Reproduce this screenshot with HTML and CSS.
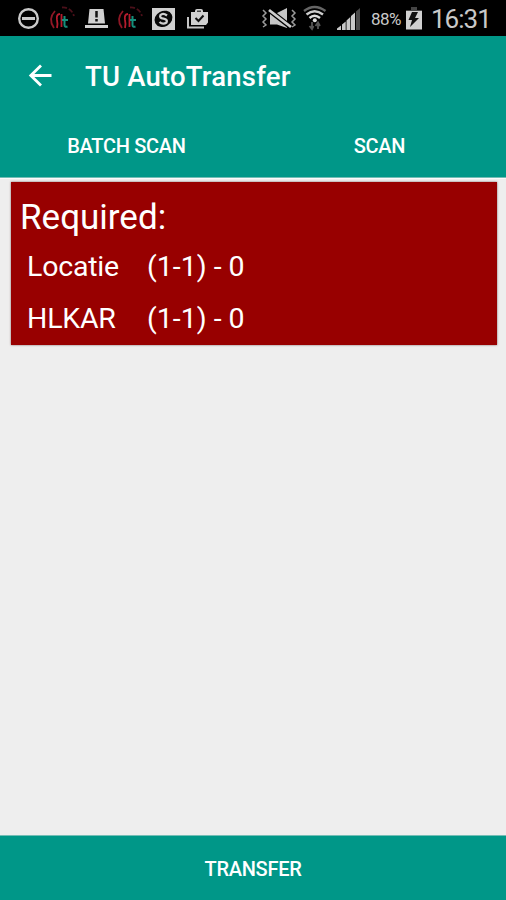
FILE: index.html
```
<!DOCTYPE html>
<html lang="nl">
<head>
    <meta charset="UTF-8">
    <meta name="viewport" content="width=device-width, initial-scale=1.0">
    <title>TU AutoTransfer</title>
    <link rel="stylesheet" href="styles.css">
</head>
<body>
    <!-- Status bar -->
    <div class="status-bar">
        <div class="status-left">
            <svg width="30" height="36" viewBox="14 0 30 36">
                <circle cx="28.500" cy="18.500" r="9.300" fill="none" stroke="#c9c9c9" stroke-width="2.400"/>
                <path d="M22 18.500H35" stroke="#c9c9c9" stroke-width="3"/>
            </svg>
            <svg width="34" height="36" viewBox="44 0 34 36">
                <g fill="none" stroke="#b51c2e" stroke-width="1.800">
                    <path d="M55 11Q47.500 19 54 28" stroke="#8d1725"/>
                    <path d="M60 14Q56 14 57 20Q58 24 57 28M61.500 14V27"/>
                    <path d="M62 7.500Q71 7 74 16" stroke="#4c101a" stroke-dasharray="5 2"/>
                    <path d="M64.500 16V25Q64.500 27.500 67.500 26.500M62 20H68" stroke="#168f7c" stroke-width="2"/>
                </g>
            </svg>
            <svg width="34" height="36" viewBox="78 0 34 36">
                <path d="M88 23.500L89.500 9H103.500L105 23.500ZM85 25H108V28H85Z" fill="#d0d0d0"/>
                <path d="M96.500 11V17.500M96.500 19V21.500" stroke="#111" stroke-width="2.500"/>
            </svg>
            <svg width="34" height="36" viewBox="44 0 34 36">
                <g fill="none" stroke="#b51c2e" stroke-width="1.800">
                    <path d="M55 11Q47.500 19 54 28" stroke="#8d1725"/>
                    <path d="M60 14Q56 14 57 20Q58 24 57 28M61.500 14V27"/>
                    <path d="M62 7.500Q71 7 74 16" stroke="#4c101a" stroke-dasharray="5 2"/>
                    <path d="M64.500 16V25Q64.500 27.500 67.500 26.500M62 20H68" stroke="#168f7c" stroke-width="2"/>
                </g>
            </svg>
            <svg width="34" height="36" viewBox="146 0 34 36">
                <path d="M152 8H175V30H152Z" fill="#d0d0d0"/>
                <ellipse cx="163.500" cy="18.800" rx="9.300" ry="7.800" fill="#080808" transform="rotate(-28 163.500 18.800)"/>
                <path d="M167 15.500Q163 12.500 160.500 15Q159 18 163.500 18.700Q168 19.500 166.500 22.500Q163 25 159.500 22" fill="none" stroke="#d0d0d0" stroke-width="2.300"/>
            </svg>
            <svg width="34" height="36" viewBox="180 0 34 36">
                <path d="M187 17H189V26.500H204V28.500H187Z" fill="#c5c5c5"/>
                <path d="M191 12H195V11Q195 9 197 9H201Q203 9 203 11V12H208V22.500L206 25H191Z" fill="#d0d0d0"/>
                <path d="M197 11.200H201" stroke="#222" stroke-width="1.200"/>
                <path d="M195.500 18L198.500 21L203.500 15.500" fill="none" stroke="#111" stroke-width="2"/>
            </svg>
        </div>
        <div class="status-right">
            <svg width="40" height="36" viewBox="260 0 40 36">
                <path d="M270 13H277L287 8V28L277 24.500H270Z" fill="#c6c6c6"/>
                <path d="M267 8.500L292 28" stroke="#000" stroke-width="5"/>
                <path d="M269 10L291 27" stroke="#cfcfcf" stroke-width="2.800"/>
                <path d="M263 10L266 13L263 16L266 19L263 22L266 25L263 27M292 10L295 13L292 16L295 19L292 22L295 25L292 27" fill="none" stroke="#999" stroke-width="1.500"/>
            </svg>
            <svg width="32" height="36" viewBox="300 0 32 36">
                <g fill="none" stroke-width="2.400">
                    <path d="M304 11Q314.500 3 325.500 11" stroke="#666"/>
                    <path d="M306.500 14.500Q314.500 8 323 14.500" stroke="#ccc"/>
                    <path d="M309.500 18Q314.500 13.500 320 18" stroke="#ddd"/>
                </g>
                <circle cx="314.800" cy="20.300" r="2" fill="#ddd"/>
                <path d="M312 22V28M309.500 26L312 29L313.500 26M318 29V23M315.500 26L318 22.500L320 26" fill="none" stroke="#555" stroke-width="1.800"/>
            </svg>
            <svg width="34" height="36" viewBox="332 0 34 36">
                <path d="M337 30V28.500L341 25.500V30ZM342 30V24.500L345.700 21.500V30ZM346.500 30V20.500L350.300 17V30ZM351 30V16L355 12.500V30Z" fill="#c8c8c8"/>
                <path d="M356 30V11.500L360 8V30Z" fill="#494949"/>
            </svg>
            <span class="battery-level">88%</span>
            <svg width="26" height="36" viewBox="402 0 26 36">
                <path d="M411 7H417V10H422V14H406V10H411Z" fill="#444"/>
                <path d="M406 11H422V29.500H406Z" fill="#d0d0d0"/>
                <path d="M412 12H418L415 18H419L410 27L412 20H408.500Z" fill="#111"/>
            </svg>
            <span class="clock">16:31</span>
        </div>
    </div>

    <!-- Title and tabs -->
    <header class="app-bar">
        <div class="toolbar">
            <svg class="back-arrow" width="24" height="24" viewBox="0 0 24 24">
                <path d="M23.500 11.500H3M13 1.500L2.800 11.500L13 21.500" fill="none" stroke="#fff" stroke-width="2.800"/>
            </svg>
            <h1 class="title">TU AutoTransfer</h1>
        </div>
        <nav class="tabs">
            <a class="tab">BATCH SCAN</a>
            <a class="tab">SCAN</a>
        </nav>
    </header>

    <main class="content">
        <section class="required">
            <h2>Required:</h2>
            <div class="row">
                <span class="name">Locatie</span>
                <span>(1-1) - 0</span>
            </div>
            <div class="row">
                <span class="name">HLKAR</span>
                <span>(1-1) - 0</span>
            </div>
        </section>
    </main>

    <footer class="transfer">TRANSFER</footer>
</body>
</html>
```
FILE: styles.css
```
* {
    box-sizing: border-box;
}

body {
    margin: 0;
    height: 900px;
    display: flex;
    flex-direction: column;
    overflow: hidden;
    font-family: Roboto, "Liberation Sans", sans-serif;
    background: #eeeeee;
    color: white;
}

svg {
    display: block;
    flex: none;
}

/* Status bar */
.status-bar {
    height: 36px;
    flex: none;
    display: flex;
    justify-content: space-between;
    padding: 0 14px;
    background: black;
    color: #c8c8c8;
}

.status-left,
.status-right {
    display: flex;
}

.battery-level {
    width: 36px;
    padding-left: 5px;
    font-size: 17px;
    line-height: 39px;
    letter-spacing: -0.5px;
}

.clock {
    width: 64px;
    padding-left: 3px;
    font-size: 26px;
    line-height: 39px;
    letter-spacing: -1px;
    white-space: nowrap;
}

/* App bar */
.app-bar {
    height: 142px;
    flex: none;
    background: #009788;
    border-bottom: 1px solid #73bdb5;
}

.toolbar {
    height: 78px;
    display: flex;
    align-items: center;
    padding: 2px 0 0 28px;
}

.title {
    margin: 0 0 0 33px;
    font-size: 27.5px;
    font-weight: 500;
    letter-spacing: 0.2px;
    white-space: nowrap;
}

.tabs {
    height: 63px;
    display: flex;
}

.tab {
    flex: 1;
    text-align: center;
    font-size: 20px;
    font-weight: 500;
    line-height: 65px;
    letter-spacing: -0.3px;
}

/* Required items */
.content {
    flex: 1;
    padding: 3px 9px 0 11px;
    border-top: 1px solid #fafafa;
}

.required {
    height: 163px;
    padding: 15px 0 0 9px;
    background: #980000;
    box-shadow: 0 0 2px #806565;
}

.required h2 {
    height: 42px;
    margin: 0;
    font-size: 35px;
    font-weight: 400;
    line-height: 42px;
}

.row {
    height: 52px;
    display: flex;
    padding-left: 7px;
    font-size: 28.5px;
    line-height: 55px;
}

.name {
    width: 120px;
    letter-spacing: -0.2px;
}

.transfer {
    height: 65px;
    flex: none;
    text-align: center;
    font-size: 20px;
    font-weight: 500;
    line-height: 66px;
    letter-spacing: -0.3px;
    background: #009788;
    border-top: 1px solid #73bdb5;
}
```
